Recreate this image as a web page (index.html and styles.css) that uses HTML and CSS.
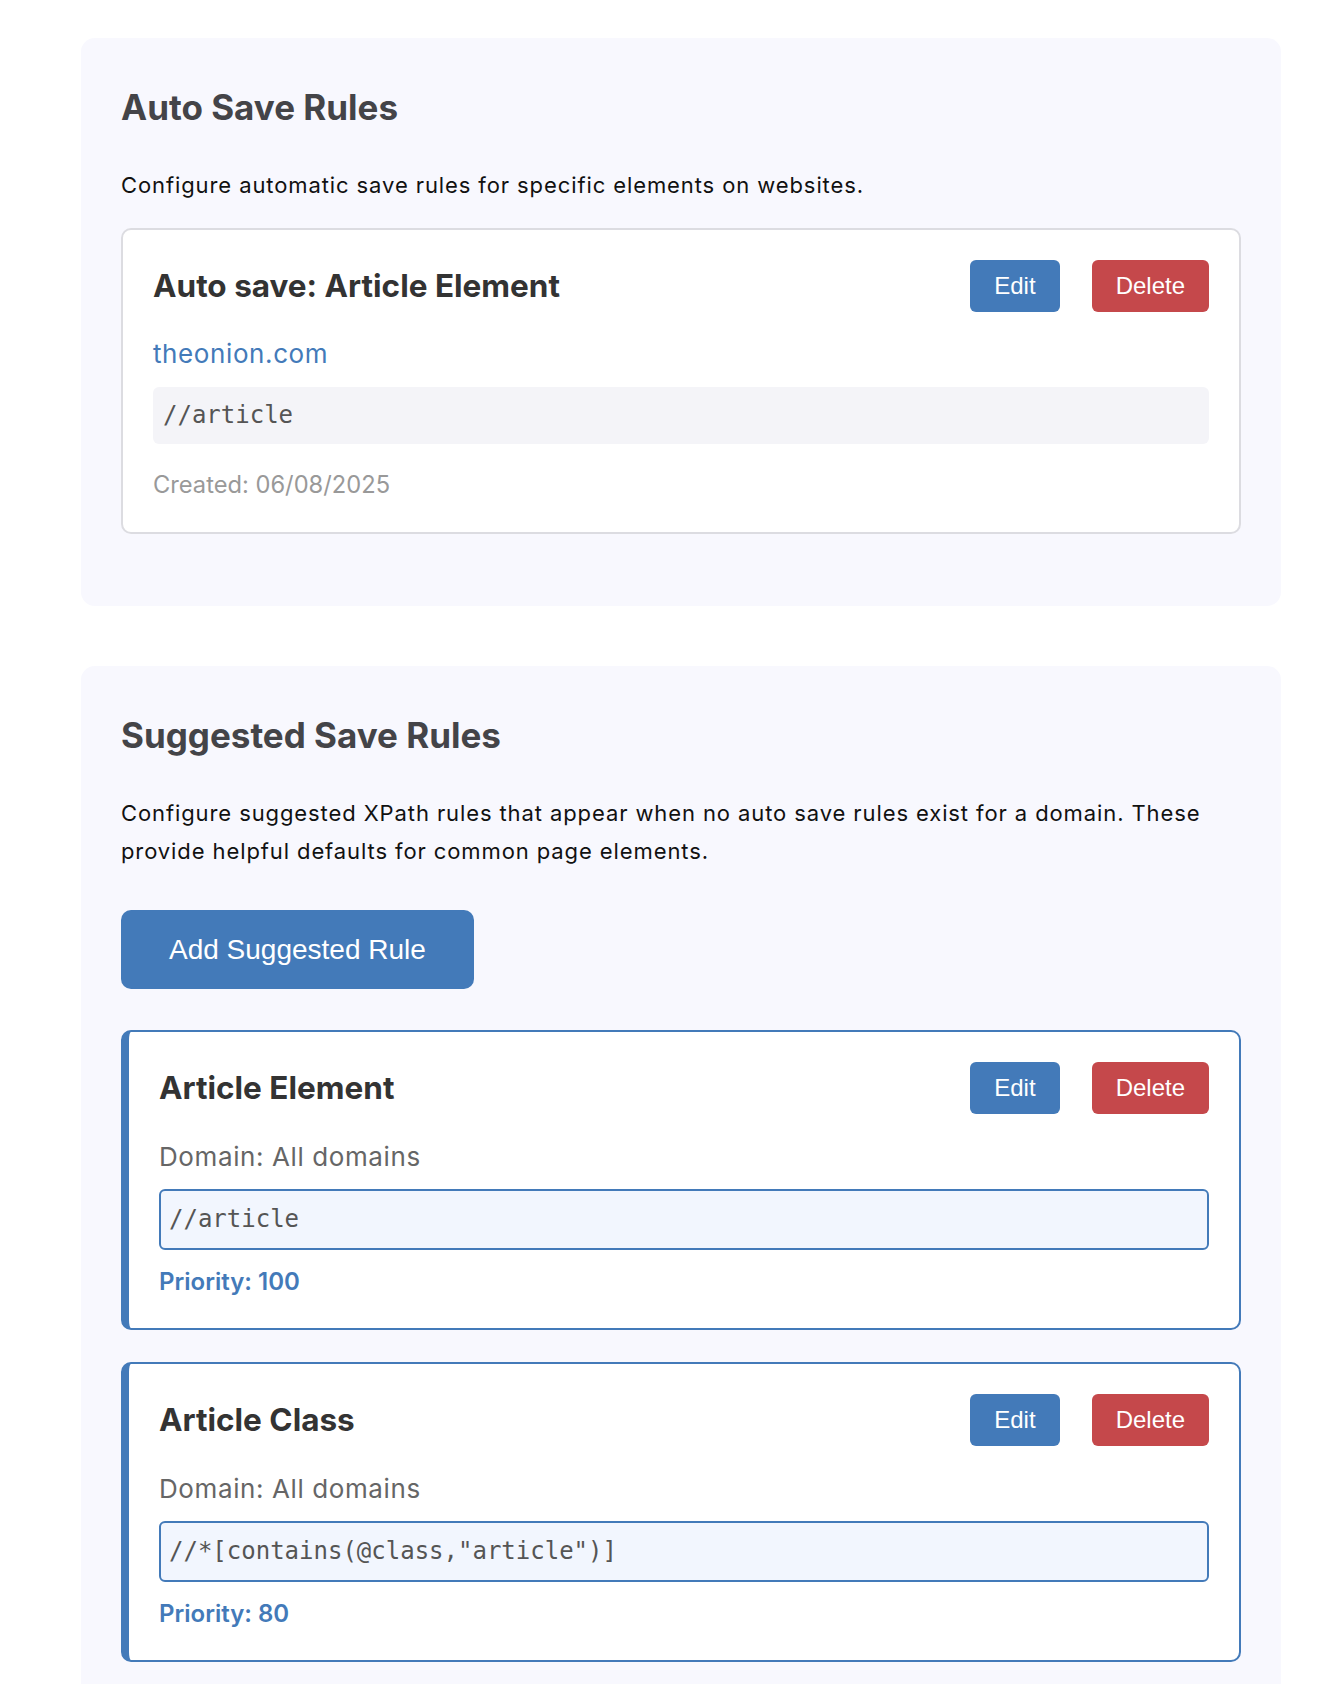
FILE: index.html
```html
<!DOCTYPE html>
<html lang="en">
<head>
<meta charset="utf-8">
<title>Save Rules</title>
<link rel="stylesheet" href="styles.css">
</head>
<body>
<div class="page">
  <section class="panel">
    <h2 class="panel-title">Auto Save Rules</h2>
    <p class="panel-desc">Configure automatic save rules for specific elements on websites.</p>
    <div class="rule-list">
      <div class="rule-card">
        <div class="rule-head">
          <h3 class="rule-title">Auto save: Article Element</h3>
          <div class="rule-actions">
            <button class="btn btn-edit">Edit</button>
            <button class="btn btn-delete">Delete</button>
          </div>
        </div>
        <div class="rule-domain">theonion.com</div>
        <div class="rule-xpath">//article</div>
        <div class="rule-created">Created: 06/08/2025</div>
      </div>
    </div>
  </section>

  <section class="panel">
    <h2 class="panel-title">Suggested Save Rules</h2>
    <p class="panel-desc">Configure suggested XPath rules that appear when no auto save rules exist for a domain. These provide helpful defaults for common page elements.</p>
    <div class="add-wrap">
      <button class="btn-add">Add Suggested Rule</button>
    </div>
    <div class="rule-list">
      <div class="rule-card suggested">
        <div class="rule-head">
          <h3 class="rule-title">Article Element</h3>
          <div class="rule-actions">
            <button class="btn btn-edit">Edit</button>
            <button class="btn btn-delete">Delete</button>
          </div>
        </div>
        <div class="sug-domain">Domain: All domains</div>
        <div class="sug-xpath">//article</div>
        <div class="sug-priority">Priority: 100</div>
      </div>
      <div class="rule-card suggested">
        <div class="rule-head">
          <h3 class="rule-title">Article Class</h3>
          <div class="rule-actions">
            <button class="btn btn-edit">Edit</button>
            <button class="btn btn-delete">Delete</button>
          </div>
        </div>
        <div class="sug-domain">Domain: All domains</div>
        <div class="sug-xpath">//*[contains(@class,"article")]</div>
        <div class="sug-priority">Priority: 80</div>
      </div>
    </div>
  </section>
</div>
</body>
</html>
```

FILE: styles.css
```css
* { box-sizing: border-box; }

html, body {
  margin: 0;
  padding: 0;
  background: #ffffff;
}

body {
  font-family: Inter, "Noto Sans", "Liberation Sans", sans-serif;
  color: #111111;
}

.page {
  width: 1200px;
  margin-left: 81px;
  padding-top: 38px;
}

.panel {
  background: #f8f8fe;
  border-radius: 14px;
  padding: 48px 40px 40px;
  margin-bottom: 60px;
}

.panel-title {
  margin: 0 0 38px;
  font-size: 35px;
  line-height: 42px;
  font-weight: 700;
  color: #444448;
}

.panel-desc {
  margin: 0 0 24px;
  font-size: 22px;
  line-height: 38px;
  letter-spacing: 0.9px;
  color: #111111;
}

.add-wrap {
  display: flex;
  margin: 40px 0 41px;
}

.btn-add {
  display: inline-flex;
  align-items: center;
  height: 79px;
  padding: 0 48px;
  border: none;
  border-radius: 10px;
  background: #437ab9;
  color: #ffffff;
  font-family: "Liberation Sans", Arial, sans-serif;
  font-size: 28px;
}

.rule-list {
  display: flex;
  flex-direction: column;
  gap: 32px;
  margin-bottom: 32px;
}

.rule-card {
  background: #ffffff;
  border: 2px solid #dcdce1;
  border-radius: 10px;
  padding: 30px;
}

.rule-card.suggested {
  border-color: #437ab9;
  border-left-width: 8px;
}

.rule-head {
  display: flex;
  align-items: center;
  justify-content: space-between;
  height: 52px;
}

.rule-title {
  margin: 0;
  font-size: 31.5px;
  line-height: 40px;
  font-weight: 700;
  color: #333333;
}

.rule-actions {
  display: flex;
  gap: 32px;
}

.btn {
  height: 52px;
  padding: 0 24px;
  border: none;
  border-radius: 6px;
  color: #ffffff;
  font-family: "Liberation Sans", Arial, sans-serif;
  font-size: 24px;
}

.btn-edit { background: #437ab9; }
.btn-delete { background: #c5484b; }

.rule-domain {
  margin-top: 24px;
  font-size: 26px;
  line-height: 36px;
  letter-spacing: 0.6px;
  color: #437ab9;
}

.rule-xpath {
  margin-top: 15px;
  padding: 12px 10px;
  background: #f4f4f8;
  border-radius: 6px;
  font-family: "DejaVu Sans Mono", "Liberation Mono", monospace;
  font-size: 24px;
  line-height: 33px;
  color: #555555;
}

.rule-created {
  margin-top: 24px;
  font-size: 23.7px;
  line-height: 34px;
  color: #999999;
}

.sug-domain {
  margin-top: 25px;
  font-size: 26px;
  line-height: 36px;
  letter-spacing: 0.6px;
  color: #666666;
}

.sug-xpath {
  margin-top: 14px;
  padding: 12px 8px;
  background: #f2f6fe;
  border: 2px solid #437ab9;
  border-radius: 6px;
  font-family: "DejaVu Sans Mono", "Liberation Mono", monospace;
  font-size: 24px;
  line-height: 33px;
  color: #555555;
}

.sug-priority {
  margin-top: 15px;
  font-size: 24px;
  line-height: 33px;
  font-weight: 600;
  color: #437ab9;
}
```
